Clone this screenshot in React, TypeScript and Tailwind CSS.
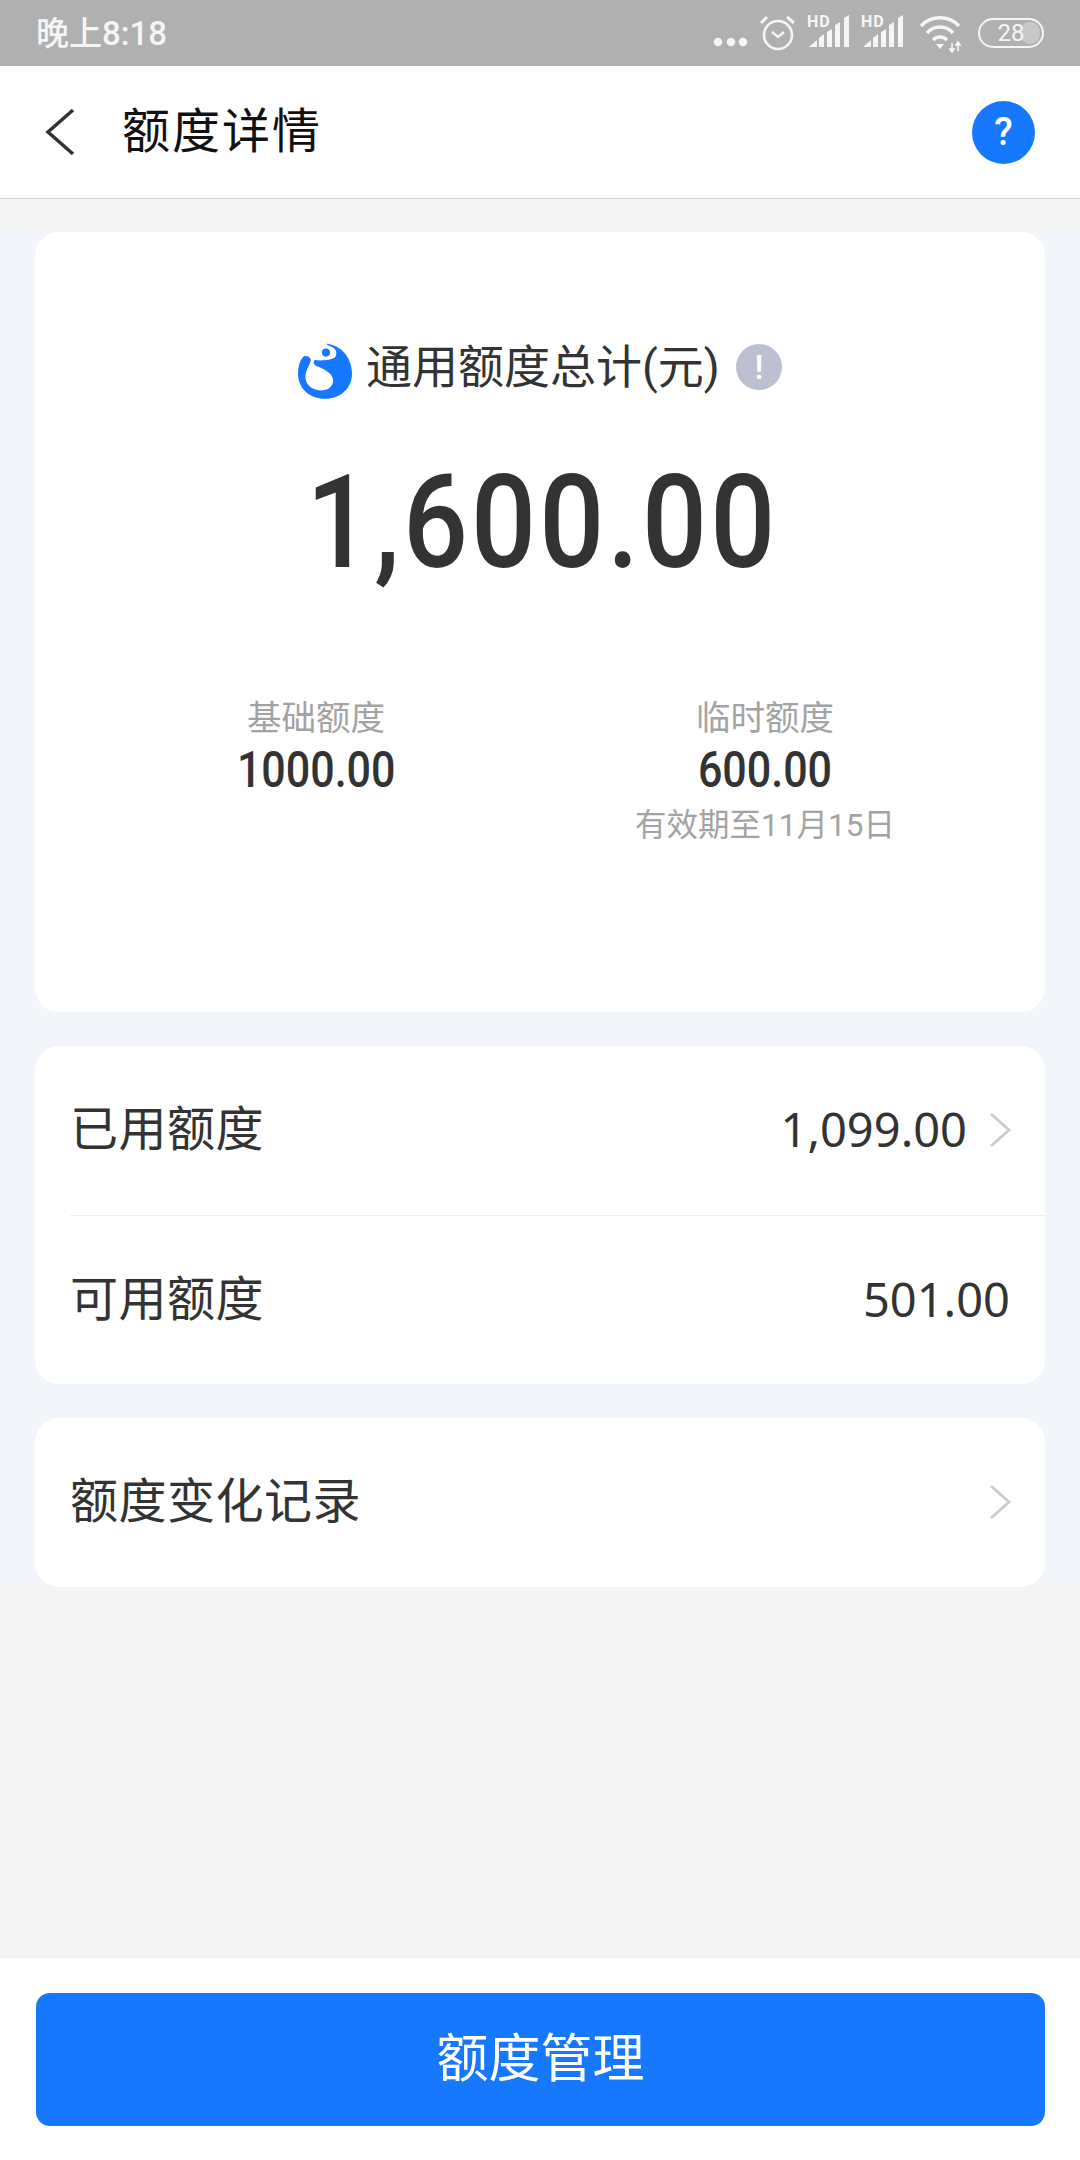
const cjk = "font-['Roboto','Noto_Sans_CJK_SC',sans-serif]"

function StatusBar() {
  return (
    <div className="h-[66px] bg-[#b0b0b0] flex items-center justify-between pl-[36px] pr-[36px] text-[#f5f5f5]">
      <span className="text-[33px] leading-none font-medium">晚上8:18</span>
      <div className="flex items-center">
        <svg width="266" height="44" viewBox="0 0 266 44" fill="none">
          <circle cx="6" cy="31" r="4.3" fill="#f5f5f5" />
          <circle cx="19" cy="31" r="4.3" fill="#f5f5f5" />
          <circle cx="31" cy="31" r="4.3" fill="#f5f5f5" />
          <circle cx="66" cy="24" r="14" stroke="#f5f5f5" strokeWidth="2.6" />
          <path d="M60 21l6 5 6-5" stroke="#f5f5f5" strokeWidth="2.4" />
          <path d="M49 12l6-6M82 12l-7-6" stroke="#f5f5f5" strokeWidth="3" />
          <path d="M97 36l8-7v7zM107 27l5-4v13h-5zM115 21l5-3v18h-5zM123 14l5-3v25h-5zM132 7l5-3v32h-5z" fill="#f5f5f5" />
          <path d="M151 36l8-7v7zM161 27l5-4v13h-5zM169 21l5-3v18h-5zM177 14l5-3v25h-5zM186 7l5-3v32h-5z" fill="#f5f5f5" />
          <text x="95" y="16" fontSize="16" fontWeight="700" fill="#f5f5f5" fontFamily="Roboto" letterSpacing="1">HD</text>
          <text x="149" y="16" fontSize="16" fontWeight="700" fill="#f5f5f5" fontFamily="Roboto" letterSpacing="1">HD</text>
          <path d="M209 15C219 4 237 4 247 15M215 22C222 14 234 14 241 22M221 29C225 25 231 25 235 29" stroke="#f5f5f5" strokeWidth="3.5" />
          <path d="M224 33h8l-4 5z" fill="#f5f5f5" />
          <path d="M240 32v8M246 32v8M238 38l2 3 2-3zM244 34l2-3 2 3z" stroke="#f5f5f5" strokeWidth="1.6" />
        </svg>
        <div className="relative w-[66px] h-[30px] rounded-full border-[2.5px] border-[#f5f5f5] flex items-center justify-center overflow-hidden">
          <div className="absolute right-[2px] top-[2px] bottom-[2px] w-[20px] rounded-full bg-[#c8c8c8]" />
          <span className="relative text-[24px] leading-none">28</span>
        </div>
      </div>
    </div>
  )
}

function Header() {
  return (
    <div className="h-[133px] bg-white border-b border-[#cfcfcf] flex items-center pl-[45px] pr-[45px]">
      <svg width="30" height="48" viewBox="0 0 30 48" fill="none">
        <path d="M28 2L3 24l25 22" stroke="#333333" strokeWidth="3.5" />
      </svg>
      <h1 className="ml-[47px] text-[48px] leading-none text-[#111111] tracking-[2px]">额度详情</h1>
      <div className="ml-auto w-[63px] h-[63px] rounded-full bg-[#1677ff] flex items-center justify-center text-white text-[38px] font-medium leading-none">?</div>
    </div>
  )
}

function Logo() {
  return (
    <svg width="54" height="56" viewBox="30 40 160 165" className="mt-[8px]">
      <path
        d="M118 42C165 50 190 90 190 130C190 175 155 205 110 205C65 205 30 175 30 130C30 112 34 95 44 82C50 74 66 78 68 90C68 100 52 120 52 140C52 165 75 180 100 180C122 180 136 165 134 148C132 130 110 118 90 110C78 106 72 96 80 90C95 92 125 92 140 82C148 70 142 55 128 50C120 48 110 40 118 42Z"
        fill="#1677ff"
      />
      <circle cx="113" cy="68" r="12" fill="#1677ff" />
    </svg>
  )
}

function Chevron() {
  return (
    <svg width="22" height="36" viewBox="0 0 22 36" fill="none" className="shrink-0">
      <path d="M2 2l18 16L2 34" stroke="#cccccc" strokeWidth="3" />
    </svg>
  )
}

function Row({ label, value, arrow }: { label: string; value?: string; arrow?: boolean }) {
  return (
    <div className={`h-[168px] flex items-center pl-[35px] ${arrow ? 'pr-[34px]' : 'pr-[35px]'}`}>
      <span className="text-[48px] leading-none text-[#333333] tracking-[0.5px]">{label}</span>
      {value && <span className="ml-auto mt-[-2px] text-[47px] leading-none text-[#333333] font-['Noto_Sans',sans-serif]">{value}</span>}
      {arrow && <div className={value ? 'ml-[22px]' : 'ml-auto'}><Chevron /></div>}
    </div>
  )
}

function SubAmount({ label, value, note, width }: { label: string; value: string; note?: string; width: string }) {
  return (
    <div className={`${width} flex flex-col items-center`}>
      <span className="text-[34.5px] leading-none text-[#a3a3a3]">{label}</span>
      <span className="mt-[9px] text-[50px] leading-none font-medium text-[#333333] scale-x-[0.86]">{value}</span>
      {note && <span className="mt-[15px] text-[31.5px] leading-none text-[#a3a3a3] whitespace-nowrap">{note}</span>}
    </div>
  )
}

export default function App() {
  return (
    <div className={`w-[1080px] h-[2160px] flex flex-col bg-[#f4f4f4] ${cjk}`}>
      <StatusBar />
      <Header />
      <div className="mt-[33px] bg-[#f2f5fa] px-[35px] flex flex-col gap-[34px] h-[1355px]">
        <div className="h-[780px] bg-white rounded-[24px] flex flex-col items-center pt-[107px]">
          <div className="flex items-center h-[56px]">
            <Logo />
            <span className="ml-[14px] text-[46px] leading-none text-[#333333]">通用额度总计(元)</span>
            <div className="ml-[16px] w-[46px] h-[46px] rounded-full bg-[#bcbfd0] flex items-center justify-center text-white text-[34px] font-medium leading-none">!</div>
          </div>
          <div className="mt-[63px] ml-[4px] text-[130px] leading-none font-medium text-[#333333] tracking-[3.5px] scale-x-[0.88]">1,600.00</div>
          <div className="mt-[113px] w-full flex">
            <SubAmount label="基础额度" value="1000.00" width="w-[562px]" />
            <SubAmount label="临时额度" value="600.00" note="有效期至11月15日" width="w-[336px]" />
          </div>
        </div>

        <div className="h-[338px] bg-white rounded-[24px] flex flex-col">
          <Row label="已用额度" value="1,099.00" arrow />
          <div className="mt-px ml-[35px] h-px bg-[#efefef]" />
          <Row label="可用额度" value="501.00" />
        </div>

        <div className="h-[169px] bg-white rounded-[24px]">
          <Row label="额度变化记录" arrow />
        </div>
      </div>

      <div className="mt-auto h-[202px] bg-white px-[36px] pt-[35px]">
        <button className="w-[1009px] h-[133px] rounded-[14px] bg-[#1677ff] text-white text-[52px] leading-none">额度管理</button>
      </div>
    </div>
  )
}
